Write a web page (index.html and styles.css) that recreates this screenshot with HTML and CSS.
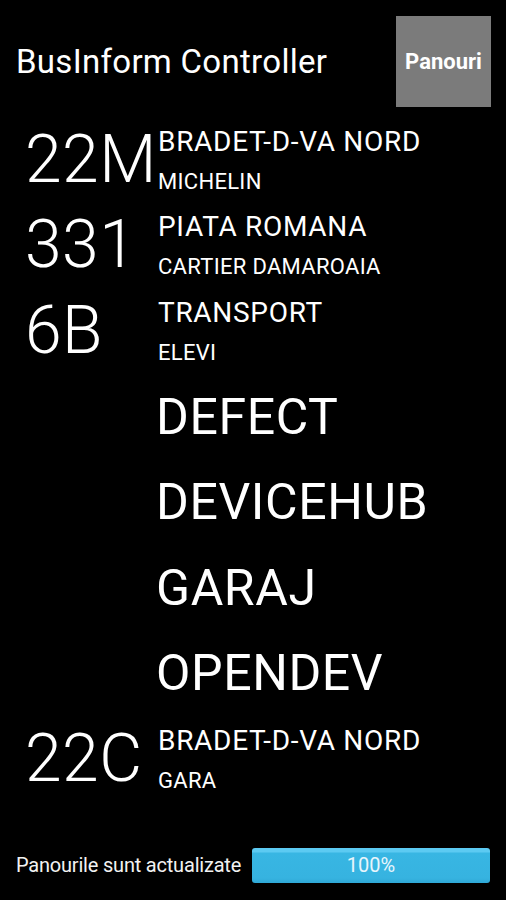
FILE: index.html
```html
<!DOCTYPE html>
<html lang="ro">
<head>
<meta charset="utf-8">
<title>BusInform Controller</title>
<link rel="stylesheet" href="styles.css">
</head>
<body>
<div class="app">
  <header class="header">
    <h1 class="title">BusInform Controller</h1>
    <button class="panels-btn">Panouri</button>
  </header>
  <main class="list">
    <div class="row">
      <div class="num">22M</div>
      <div class="info"><div class="line1">BRADET-D-VA NORD</div><div class="line2">MICHELIN</div></div>
    </div>
    <div class="row">
      <div class="num">331</div>
      <div class="info"><div class="line1">PIATA ROMANA</div><div class="line2">CARTIER DAMAROAIA</div></div>
    </div>
    <div class="row">
      <div class="num">6B</div>
      <div class="info"><div class="line1">TRANSPORT</div><div class="line2">ELEVI</div></div>
    </div>
    <div class="row">
      <div class="num"></div>
      <div class="info"><div class="big">DEFECT</div></div>
    </div>
    <div class="row">
      <div class="num"></div>
      <div class="info"><div class="big">DEVICEHUB</div></div>
    </div>
    <div class="row">
      <div class="num"></div>
      <div class="info"><div class="big">GARAJ</div></div>
    </div>
    <div class="row">
      <div class="num"></div>
      <div class="info"><div class="big">OPENDEV</div></div>
    </div>
    <div class="row">
      <div class="num">22C</div>
      <div class="info"><div class="line1">BRADET-D-VA NORD</div><div class="line2">GARA</div></div>
    </div>
  </main>
  <footer class="footer">
    <span class="status">Panourile sunt actualizate</span>
    <div class="bar"><span class="bar-label">100%</span></div>
  </footer>
</div>
</body>
</html>
```
FILE: styles.css
```css
html, body {
  margin: 0;
  padding: 0;
  background: #000;
}
body {
  font-family: Roboto, "Noto Sans", sans-serif;
  color: #fff;
  width: 506px;
  height: 900px;
  overflow: hidden;
}
.header {
  display: flex;
  align-items: center;
  justify-content: space-between;
  padding: 16px 15px 0 16px;
}
.title {
  margin: 0;
  font-size: 33px;
  font-weight: 400;
  line-height: 40px;
  letter-spacing: 0.3px;
}
.panels-btn {
  width: 95px;
  height: 91px;
  background: #7b7b7b;
  border: none;
  border-radius: 0;
  color: #fff;
  font-family: Roboto, sans-serif;
  font-weight: 700;
  font-size: 22px;
  padding: 0;
}
.list {
  margin-top: 10px;
}
.row {
  display: flex;
  align-items: center;
  height: 85.6px;
}
.num {
  width: 158px;
  flex: none;
  box-sizing: border-box;
  padding-left: 25px;
  font-size: 66px;
  font-weight: 300;
  line-height: 78px;
  white-space: nowrap;
  letter-spacing: 0.5px;
}
.info {
  display: flex;
  flex-direction: column;
}
.line1 {
  font-size: 28px;
  line-height: 34px;
  letter-spacing: 0.7px;
}
.line2 {
  font-size: 22px;
  line-height: 26px;
  margin-top: 10px;
  letter-spacing: 0.3px;
}
.big {
  font-size: 50px;
  line-height: 60px;
  margin-left: -2px;
  letter-spacing: 0.6px;
}
.footer {
  display: flex;
  align-items: center;
  gap: 11px;
  margin-top: 46px;
  padding: 0 16px 0 16px;
}
.status {
  font-size: 20px;
  color: #f2f2f2;
  white-space: nowrap;
  letter-spacing: -0.2px;
}
.bar {
  flex: 1;
  height: 35px;
  border-radius: 3px;
  background: linear-gradient(#5ccaf2 0, #5ccaf2 4px, #38b6e3 5px, #36b3e0 30px, #2fa8d6 35px);
  display: flex;
  align-items: center;
  justify-content: center;
}
.bar-label {
  font-size: 20px;
  color: #e8f5fc;
}
```
